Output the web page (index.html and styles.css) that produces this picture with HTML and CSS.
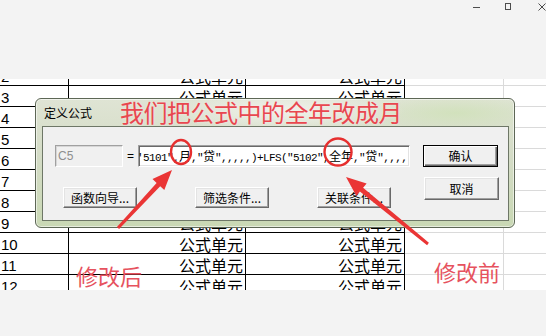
FILE: index.html
```html
<!DOCTYPE html>
<html lang="zh">
<head>
<meta charset="utf-8">
<link rel="stylesheet" href="styles.css">
</head>
<body>
<div class="titlebar">
  <span class="wc-min"></span>
  <span class="wc-max"></span>
  <svg class="wc-close" width="8" height="8" viewBox="0 0 8 8"><path d="M0.5 0.5L7.5 7.5M7.5 0.5L0.5 7.5" stroke="#4d4d4d" stroke-width="1"/></svg>
</div>
<div class="sheet">
  <div class="rows">
    <div class="row"><div class="c rn">2</div><div class="c a">公式单元</div><div class="c b">公式单元</div><div class="c d"></div><div class="c e"></div></div>
    <div class="row"><div class="c rn">3</div><div class="c a">公式单元</div><div class="c b">公式单元</div><div class="c d"></div><div class="c e"></div></div>
    <div class="row"><div class="c rn">4</div><div class="c a">公式单元</div><div class="c b">公式单元</div><div class="c d"></div><div class="c e"></div></div>
    <div class="row"><div class="c rn">5</div><div class="c a">公式单元</div><div class="c b">公式单元</div><div class="c d"></div><div class="c e"></div></div>
    <div class="row"><div class="c rn">6</div><div class="c a">公式单元</div><div class="c b">公式单元</div><div class="c d"></div><div class="c e"></div></div>
    <div class="row"><div class="c rn">7</div><div class="c a">公式单元</div><div class="c b">公式单元</div><div class="c d"></div><div class="c e"></div></div>
    <div class="row"><div class="c rn">8</div><div class="c a">公式单元</div><div class="c b">公式单元</div><div class="c d"></div><div class="c e"></div></div>
    <div class="row"><div class="c rn">9</div><div class="c a">公式单元</div><div class="c b">公式单元</div><div class="c d"></div><div class="c e"></div></div>
    <div class="row"><div class="c rn">10</div><div class="c a">公式单元</div><div class="c b">公式单元</div><div class="c d"></div><div class="c e"></div></div>
    <div class="row"><div class="c rn">11</div><div class="c a">公式单元</div><div class="c b">公式单元</div><div class="c d"></div><div class="c e"></div></div>
    <div class="row"><div class="c rn">12</div><div class="c a">公式单元</div><div class="c b">公式单元</div><div class="c d"></div><div class="c e"></div></div>
  </div>
</div>
<div class="statusbar"></div>

<div class="dialog">
  <div class="dtitle">定义公式</div>
  <div class="client">
    <div class="main">
      <div class="frow">
        <div class="f-c5">C5</div>
        <div class="eq">=</div>
        <div class="f-formula">'5101",<span class="cj">月</span>,"<span class="cj">贷</span>",,,,,)+LFS("5102",<span class="cj">全年</span>,"<span class="cj">贷</span>",,,,</div>
      </div>
      <div class="brow">
        <button class="btn b1">函数向导...</button>
        <button class="btn b2">筛选条件...</button>
        <button class="btn b3">关联条件...</button>
      </div>
    </div>
    <div class="side">
      <button class="btn default">确认</button>
      <button class="btn cancel">取消</button>
    </div>
  </div>
</div>

<div class="note big">我们把公式中的全年改成月</div>
<div class="note after">修改后</div>
<div class="note before">修改前</div>

<svg class="marks" width="546" height="336" viewBox="0 0 546 336">
  <ellipse cx="181" cy="152" rx="10" ry="12" fill="none" stroke="#e62f2f" stroke-width="2.4"/>
  <ellipse cx="338" cy="152" rx="13.5" ry="13.5" fill="none" stroke="#e62f2f" stroke-width="2.4"/>
  <polygon fill="#ea3535" points="119.1,229 160.2,186.3 164.3,190.1 172,170 152.5,179.1 156.6,182.9 116.9,227"/>
  <polygon fill="#ea3535" points="428.9,242.8 363.1,187.8 366.6,183.5 346,177 356.4,195.9 359.9,191.6 427.1,245.2"/>
</svg>
</body>
</html>
```

FILE: styles.css
```css
html, body {
  margin: 0;
  padding: 0;
}
body {
  width: 546px;
  height: 336px;
  overflow: hidden;
  position: relative;
  background: #f3f3f3;
  font-family: "Noto Sans CJK SC", sans-serif;
  color: #000;
}

/* window title strip */
.titlebar {
  height: 79px;
  box-sizing: border-box;
  display: flex;
  align-items: flex-start;
  padding-left: 473px;
}
.wc-min {
  width: 8px;
  height: 1px;
  background: #4d4d4d;
  margin-top: 7px;
}
.wc-max {
  width: 7px;
  height: 7px;
  box-sizing: border-box;
  border: 1px solid #4d4d4d;
  margin-left: 25px;
  margin-top: 3px;
}
.wc-close {
  margin-left: 27px;
  margin-top: 3px;
  flex: none;
}

/* spreadsheet */
.sheet {
  height: 211px;
  overflow: hidden;
  background: #fff;
}
.rows {
  margin-top: -14px;
}
.row {
  display: flex;
  height: 21px;
}
.c {
  box-sizing: border-box;
  height: 21px;
  border-bottom: 1px solid #000;
  border-right: 1px solid #000;
  font-size: 16px;
  line-height: 22px;
  text-align: right;
  padding-right: 2px;
  white-space: nowrap;
  overflow: hidden;
}
.rn {
  width: 69px;
  text-align: left;
  padding-left: 1px;
  font-family: "Liberation Sans", sans-serif;
  font-size: 15px;
  line-height: 24px;
}
.a { width: 177px; }
.b { width: 159px; }
.d {
  width: 99px;
  border-color: #dadada;
}
.e {
  flex: 1;
  border-right: 0;
  border-bottom-color: #dadada;
}

.statusbar {
  height: 46px;
  background: #f3f3f3;
}

/* dialog */
.dialog {
  position: absolute;
  left: 35px;
  top: 98px;
  width: 480px;
  height: 130px;
  box-sizing: border-box;
  border: 1px solid #5d6756;
  border-radius: 6px;
  background:
    radial-gradient(ellipse 120px 20px at 250px 12px, rgba(255,255,255,0.55), rgba(255,255,255,0)),
    radial-gradient(ellipse 90px 18px at 420px 14px, rgba(205,225,180,0.7), rgba(205,225,180,0)),
    linear-gradient(180deg, #dfe4d4 0%, #d4dcc6 45%, #c9d8b4 100%);
  box-shadow: inset 0 0 0 1px rgba(255,255,255,0.55);
}
.dtitle {
  height: 27px;
  line-height: 27px;
  padding-left: 8px;
  font-size: 12px;
}
.client {
  margin: 0 5px 0 6px;
  height: 95px;
  box-sizing: border-box;
  border: 1px solid #6e7767;
  background: #f0f0f0;
  display: flex;
  padding: 18px 0 0 12px;
}
.frow {
  display: flex;
  height: 22px;
}
.f-c5 {
  width: 68px;
  height: 22px;
  box-sizing: border-box;
  border: 1px solid;
  border-color: #a0a0a0 #fff #fff #a0a0a0;
  box-shadow: inset 1px 1px #d6d6d6;
  background: #f0f0f0;
  color: #8e8e8e;
  font-family: "Liberation Sans", sans-serif;
  font-size: 12px;
  line-height: 20px;
  padding-left: 2px;
}
.eq {
  width: 15px;
  text-align: center;
  font-family: "Liberation Sans", sans-serif;
  font-size: 12px;
  line-height: 22px;
}
.f-formula {
  width: 272px;
  height: 22px;
  box-sizing: border-box;
  border: 1px solid;
  border-color: #a0a0a0 #fff #fff #a0a0a0;
  box-shadow: inset 1px 1px #696969, inset -1px -1px #e3e3e3;
  background: #fff;
  overflow: hidden;
  white-space: nowrap;
  font-family: "Liberation Mono", monospace;
  font-size: 11px;
  letter-spacing: -0.6px;
  line-height: 20px;
  text-indent: -2px;
}
.cj {
  font-family: "Noto Sans CJK SC", sans-serif;
  font-size: 12px;
  letter-spacing: 0;
}
.brow {
  display: flex;
  margin-top: 20px;
  padding-left: 8px;
}
.btn {
  box-sizing: border-box;
  width: 74px;
  height: 21px;
  padding: 0;
  margin: 0;
  background: #f0f0f0;
  border: 1px solid;
  border-color: #fff #696969 #696969 #fff;
  border-radius: 0;
  box-shadow: inset -1px -1px #a0a0a0, inset 1px 1px #e3e3e3;
  font-family: "Noto Sans CJK SC", sans-serif;
  font-size: 12px;
  line-height: 19px;
  color: #000;
  text-align: center;
}
.b2 { margin-left: 58px; }
.b3 { margin-left: 48px; }
.side {
  display: flex;
  flex-direction: column;
  margin-left: 13px;
}
.default {
  width: 75px;
  height: 22px;
  border: 1px solid #000;
  box-shadow: inset 1px 1px #fff, inset -1px -1px #696969, inset -2px -2px #a0a0a0;
  line-height: 20px;
}
.cancel {
  width: 75px;
  height: 23px;
  margin-top: 10px;
  margin-left: 1px;
  line-height: 21px;
}

/* annotations */
.note {
  position: absolute;
  font-family: "Noto Sans CJK SC", sans-serif;
  color: #e8474f;
  white-space: nowrap;
}
.big {
  left: 120px;
  top: 100px;
  font-size: 24px;
  line-height: 24px;
  letter-spacing: -0.5px;
  text-shadow: 0 0 2px rgba(255, 235, 235, 0.8);
}
.after {
  left: 76px;
  top: 264px;
  font-size: 22px;
  line-height: 22px;
  color: #e6525e;
}
.before {
  left: 434px;
  top: 260px;
  font-size: 22px;
  line-height: 22px;
  color: #e6525e;
}
.marks {
  position: absolute;
  left: 0;
  top: 0;
  pointer-events: none;
}
```
